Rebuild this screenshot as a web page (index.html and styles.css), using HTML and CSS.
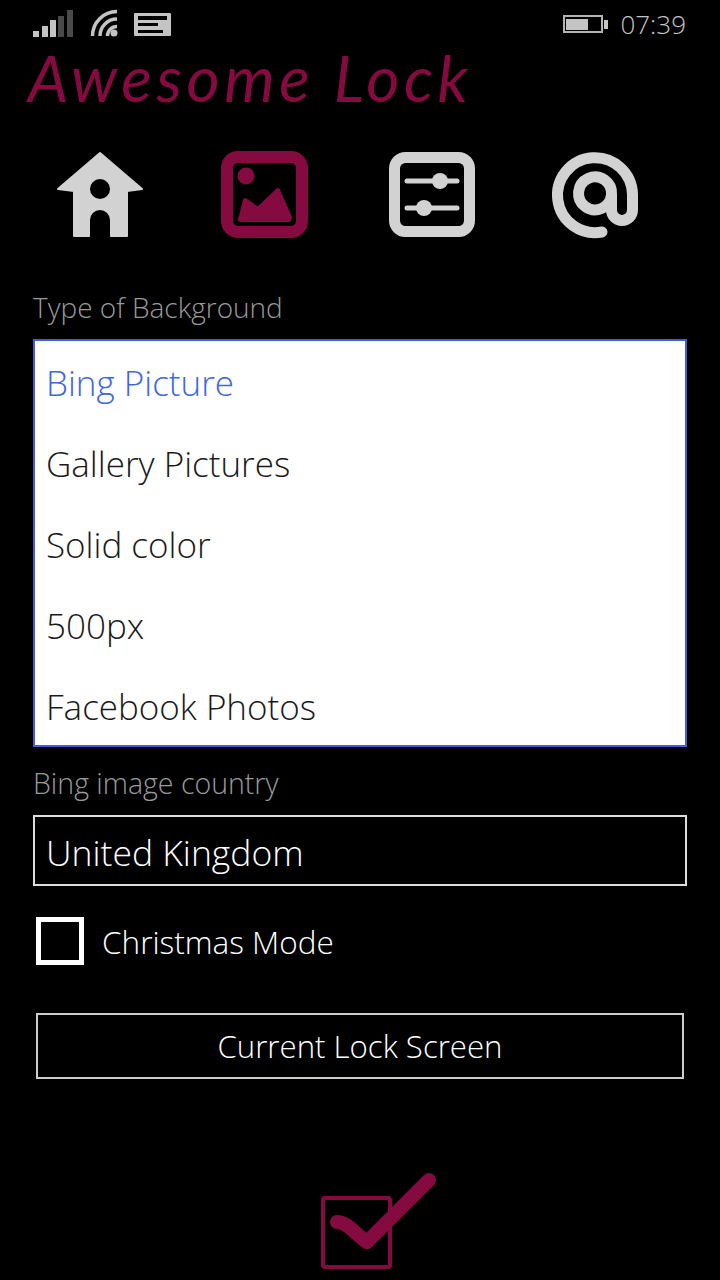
FILE: index.html
```html
<!DOCTYPE html>
<html>
<head lang="en">
    <meta charset="UTF-8">
    <title>Awesome Lock</title>
    <link rel="stylesheet" href="styles.css">
</head>
<body>
<div class="status">
    <svg class="status-left" width="140" height="30" viewBox="33 9 140 30">
        <rect x="33" y="31" width="6" height="6" fill="#c4c4c4"/>
        <rect x="42" y="26" width="6" height="11" fill="#c4c4c4"/>
        <rect x="50" y="20" width="6" height="17" fill="#c4c4c4"/>
        <rect x="58" y="16" width="6" height="21" fill="#4a4a4a"/>
        <rect x="67" y="10" width="6" height="27" fill="#4a4a4a"/>
        <g fill="none" stroke="#c4c4c4" stroke-width="3.5">
            <path d="M92.5 36A24.5 24.5 0 0 1 117 11.5"/>
            <path d="M100 36A17 17 0 0 1 117 19"/>
            <path d="M107.5 36A9.5 9.5 0 0 1 117 26.5"/>
        </g>
        <circle cx="114" cy="33" r="3.5" fill="#c4c4c4"/>
        <rect x="134" y="13" width="37" height="23" rx="1" fill="#c4c4c4"/>
        <rect x="138" y="16" width="29" height="4" fill="#000"/>
        <rect x="138" y="23" width="20" height="3" fill="#000"/>
        <rect x="138" y="30" width="25" height="3" fill="#000"/>
    </svg>
    <div class="status-right">
        <svg width="45" height="18" viewBox="0 0 45 18">
            <rect x="1" y="1" width="38" height="16" fill="none" stroke="#b4b4b4" stroke-width="2"/>
            <rect x="3" y="4" width="22" height="11" fill="#c4c4c4"/>
            <rect x="41" y="5" width="4" height="9" fill="#c4c4c4"/>
        </svg>
        <span class="clock">07:39</span>
    </div>
</div>

<h1 class="title">Awesome Lock</h1>

<div class="tabs">
    <svg class="tab" width="90" height="90" viewBox="0 0 90 90">
        <path fill="#d2d2d2" fill-rule="evenodd" stroke="#d2d2d2" stroke-width="2" stroke-linejoin="round" d="M45 3 L87 39 L72 41 L72 86 L56 86 L56 70 A11 11 0 0 0 34 70 L34 86 L19 86 L19 41 L3 39 Z M45 28 A11 11 0 1 0 45 50 A11 11 0 1 0 45 28 Z"/>
    </svg>
    <svg class="tab" width="90" height="90" viewBox="0 0 90 90">
        <rect x="6" y="7" width="75" height="75" rx="11" fill="none" stroke="#850a40" stroke-width="12"/>
        <circle cx="25" cy="26" r="8.5" fill="#850a40"/>
        <path fill="#850a40" stroke="#850a40" stroke-width="4" stroke-linejoin="round" d="M19 70 L24 50 L37 59 L57 40 L69 67 L68 70 Z"/>
    </svg>
    <svg class="tab" width="90" height="90" viewBox="0 0 90 90">
        <rect x="7.5" y="7.5" width="75" height="74" rx="11" fill="none" stroke="#d2d2d2" stroke-width="11"/>
        <g stroke="#d2d2d2" stroke-width="5" stroke-linecap="round">
            <path d="M20 31 H70"/>
            <path d="M20 58 H70"/>
        </g>
        <circle cx="53" cy="31" r="8" fill="#d2d2d2"/>
        <circle cx="37" cy="58" r="8" fill="#d2d2d2"/>
    </svg>
    <svg class="tab" width="90" height="90" viewBox="0 0 90 90">
        <path fill="none" stroke="#d2d2d2" stroke-width="11" stroke-linecap="round" d="M49 82 A37.5 37.5 0 1 1 79.5 44.5 L79.5 60 A10.5 10.5 0 0 1 58.5 60 L58.5 44.5 A16.5 16.5 0 1 0 58.4 45.5"/>
    </svg>
</div>

<div class="field-label">Type of Background</div>
<ul class="picker">
    <li class="selected">Bing Picture</li>
    <li>Gallery Pictures</li>
    <li>Solid color</li>
    <li>500px</li>
    <li>Facebook Photos</li>
</ul>

<div class="field-label label-country">Bing image country</div>
<div class="combo">United Kingdom</div>

<div class="check-row">
    <div class="check-box"></div>
    <span class="check-text">Christmas Mode</span>
</div>

<div class="button">Current Lock Screen</div>

<div class="appbar">
    <svg class="tab" width="120" height="105" viewBox="0 0 120 105">
        <rect x="7" y="29" width="67" height="69" rx="2" fill="none" stroke="#850a40" stroke-width="4"/>
        <path fill="none" stroke="#850a40" stroke-width="14" stroke-linecap="round" stroke-linejoin="round" d="M21 53 C32 53 40 66 51 73 L113 11"/>
    </svg>
</div>
</body>
</html>
```

FILE: styles.css
```css
body, ul, li, h1 {
    margin: 0;
    padding: 0;
    list-style: none;
}
html, body {
    height: 1280px;
    overflow: hidden;
}
body {
    background: #000;
    color: #fff;
    font-family: "Open Sans", "Noto Sans", sans-serif;
    font-weight: 300;
}
.status {
    height: 48px;
    display: flex;
    justify-content: space-between;
    padding: 9px 34px 0 33px;
    box-sizing: border-box;
}
.status-right {
    display: flex;
    align-items: center;
    gap: 12px;
    height: 30px;
}
.clock {
    font-size: 26px;
    color: #c4c4c4;
}
.title {
    height: 62px;
    margin-left: 28px;
    font-family: "Lato", sans-serif;
    font-style: italic;
    font-weight: 400;
    font-size: 64px;
    letter-spacing: 4.5px;
    line-height: 60px;
    color: #850a40;
}
.tabs {
    display: flex;
    padding: 40px 0 0 55px;
    gap: 76px;
    height: 90px;
}
.tab {
    overflow: visible;
    filter: blur(0.5px);
}
.field-label {
    margin: 48px 0 0 33px;
    height: 51px;
    font-size: 28px;
    line-height: 38px;
    color: #9a9a9a;
}
.label-country {
    margin-top: 17px;
    height: 51px;
    font-size: 28.5px;
}
.picker {
    margin: 0 33px;
    height: 408px;
    box-sizing: border-box;
    border: 2px solid #3f5fd8;
    background: #fff;
    color: #1a1a1a;
    font-size: 35px;
    padding-top: 3px;
}
.picker li {
    height: 81px;
    line-height: 78px;
    padding-left: 11px;
}
.picker .selected {
    color: #3f66e0;
}
.combo {
    margin: 0 33px;
    height: 71px;
    box-sizing: border-box;
    border: 2px solid #ddd;
    font-size: 35.5px;
    line-height: 70px;
    padding-left: 11px;
}
.check-row {
    display: flex;
    align-items: center;
    gap: 18px;
    margin: 31px 0 0 36px;
    font-size: 31.5px;
    height: 48px;
}
.check-box {
    width: 38px;
    height: 38px;
    border: 5px solid #fff;
}
.check-text {
    padding-top: 1px;
}
.button {
    margin: 48px 36px 0;
    height: 66px;
    box-sizing: border-box;
    border: 2px solid #ccc;
    font-size: 31.2px;
    line-height: 62px;
    text-align: center;
}
.appbar {
    display: flex;
    justify-content: center;
    padding: 90px 0 0 32px;
}
```
